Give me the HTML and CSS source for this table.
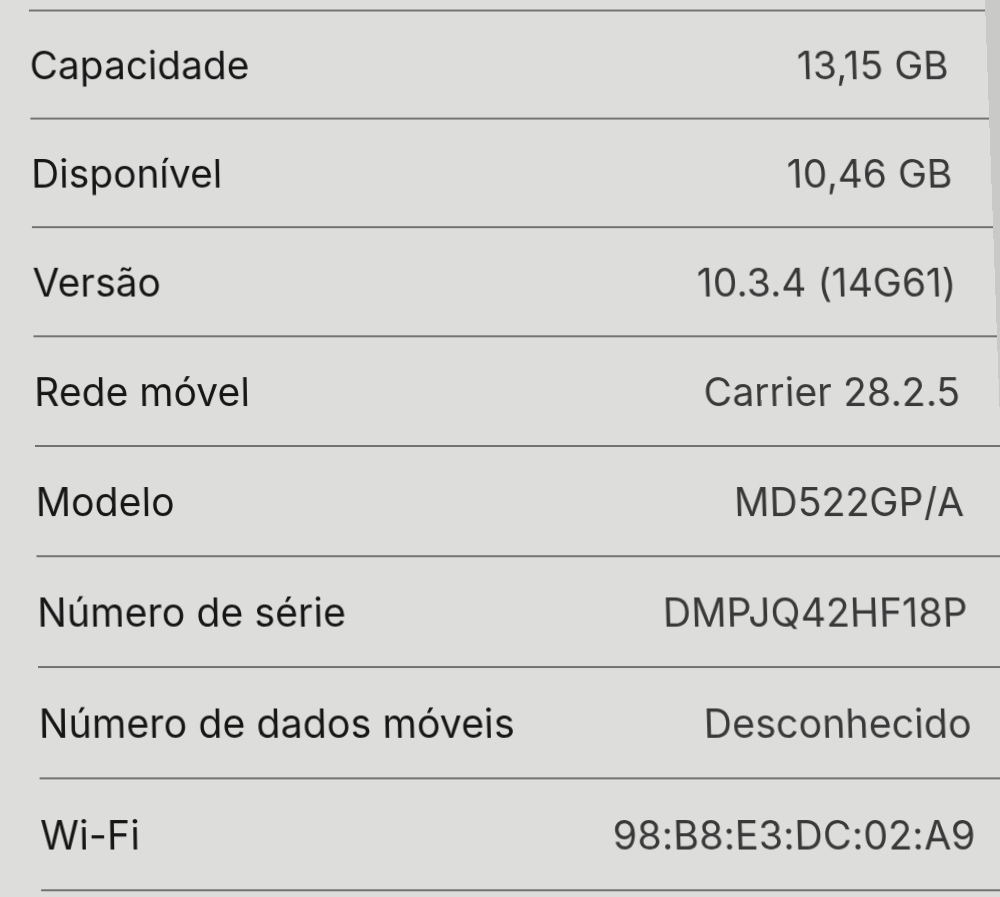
FILE: index.html
```html
<!DOCTYPE html>
<html lang="pt">
<head>
<meta charset="utf-8">
<title>Sobre</title>
<link rel="stylesheet" href="styles.css">
</head>
<body>
<div class="screen">
  <ul class="list">
    <li class="row"><span class="label">Capacidade</span><span class="value">13,15 GB</span></li>
    <li class="row"><span class="label">Disponível</span><span class="value">10,46 GB</span></li>
    <li class="row"><span class="label">Versão</span><span class="value">10.3.4 (14G61)</span></li>
    <li class="row"><span class="label">Rede móvel</span><span class="value">Carrier 28.2.5</span></li>
    <li class="row"><span class="label">Modelo</span><span class="value">MD522GP/A</span></li>
    <li class="row"><span class="label">Número de série</span><span class="value">DMPJQ42HF18P</span></li>
    <li class="row"><span class="label">Número de dados móveis</span><span class="value">Desconhecido</span></li>
    <li class="row"><span class="label">Wi-Fi</span><span class="value">98:B8:E3:DC:02:A9</span></li>
  </ul>
</div>
</body>
</html>
```
FILE: styles.css
```css
html, body {
  margin: 0;
  padding: 0;
  height: 100%;
  overflow: hidden;
}
body {
  background: linear-gradient(to right, #dddddc 985px, #c9c9c8 985px);
  font-family: Inter, "Noto Sans", "Liberation Sans", sans-serif;
}
.screen {
  width: 1001px;
  height: 100%;
  background: #dddddc;
  padding-top: 5px;
  box-sizing: border-box;
  transform-origin: 50% 50%;
  transform: perspective(1000px) rotateX(1.3deg) skewX(1.4deg);
}
.list {
  list-style: none;
  margin: 0 0 0 35px;
  padding: 0;
  border-bottom: 2px solid #737373;
}
.row {
  display: flex;
  justify-content: space-between;
  align-items: center;
  height: 108px;
  border-top: 2px solid #737373;
  padding-right: 39px;
  font-size: 39px;
  letter-spacing: 0.1px;
}
.label {
  color: #161616;
}
.value {
  color: #393939;
}
```
